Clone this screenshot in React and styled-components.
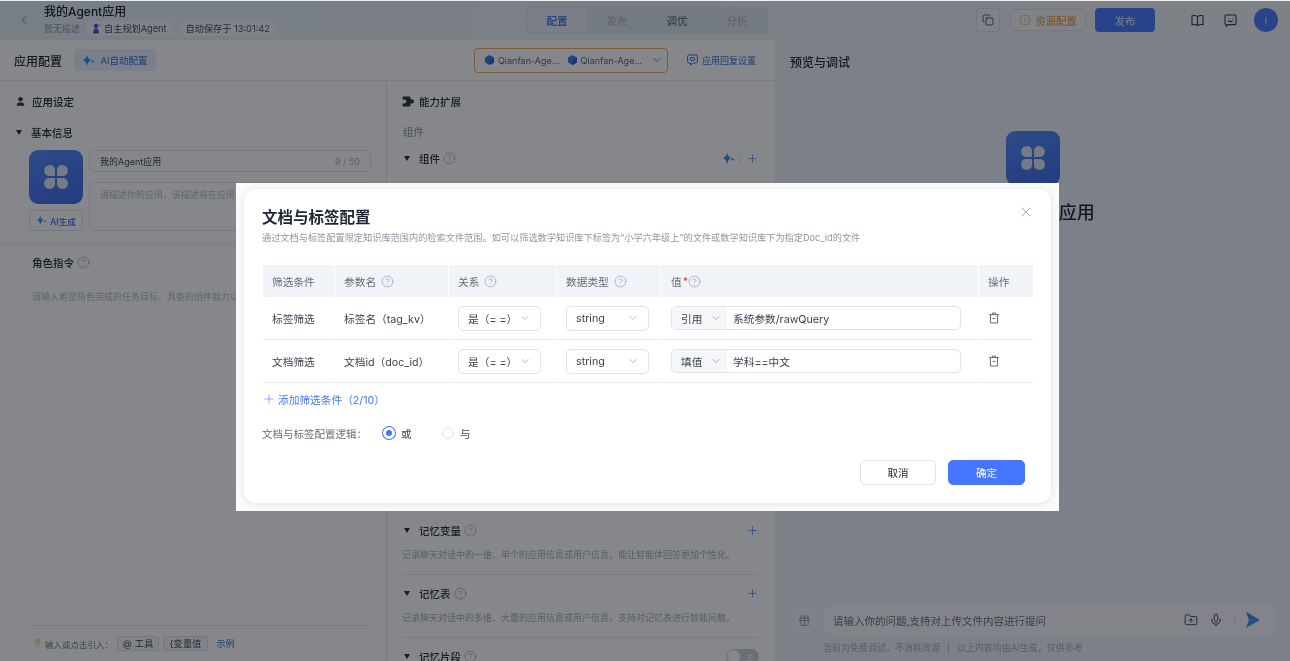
import React from 'react';
import styled, { createGlobalStyle } from 'styled-components';
import {
  ChevronLeft, ChevronDown, Plus, X, CircleHelp, Copy, CircleAlert,
  User, Mic, FolderUp, Gift, Lightbulb,
} from 'lucide-react';

const font = `Inter, "Noto Sans CJK SC", "Noto Sans", sans-serif`;

const Global = createGlobalStyle`
  html, body { margin: 0; padding: 0; height: 100%; overflow: hidden; background: #a9abad; }
  body { font-family: ${font}; color: #1f2733; }
  * { box-sizing: border-box; }
`;

const Sparkle = ({ size = 13 }) => (
  <svg width={size} height={size} viewBox="0 0 14 14" fill="#2f8fe8">
    <path d="M5.5 0.5 C6 3.8 7.2 5.6 10 6.5 C7.2 7.4 6 9.8 5.5 13.5 C5 9.8 3.8 7.4 1 6.5 C3.8 5.6 5 3.8 5.5 0.5Z" />
    <path d="M11.5 6 C11.7 7.2 12.2 7.7 13.5 8 C12.2 8.3 11.7 8.9 11.5 10 C11.3 8.9 10.8 8.3 9.5 8 C10.8 7.7 11.3 7.2 11.5 6Z" />
  </svg>
);

const Clover = ({ size = 28 }) => (
  <svg width={size} height={size} viewBox="0 0 28 28" fill="#dfe6ee">
    <path d="M13 13 H6.5 A5.5 5.5 0 1 1 13 6.5 Z" />
    <path d="M15 13 H21.5 A5.5 5.5 0 1 0 15 6.5 Z" />
    <path d="M13 15 H6.5 A5.5 5.5 0 1 0 13 21.5 Z" />
    <path d="M15 15 H21.5 A5.5 5.5 0 1 1 15 21.5 Z" />
  </svg>
);

const Cube = () => (
  <svg width="9" height="10" viewBox="0 0 10 11">
    <path d="M5 0 L10 2.8 V8.2 L5 11 L0 8.2 V2.8Z" fill="#2f7ff0" />
    <path d="M5 5 L10 2.8 V8.2 L5 11Z" fill="#1f5fd0" />
  </svg>
);

const AgentBadge = () => (
  <svg width="9" height="11" viewBox="0 0 9 11">
    <circle cx="4" cy="3" r="2.2" fill="#2c55d8" />
    <path d="M1 10.5 C1 7 2.4 5.6 4 5.6 C5.6 5.6 7 7 7 10.5Z" fill="#2c55d8" />
    <path d="M6.6 1 L8.6 2.2 L7.2 3.4Z" fill="#e8892b" />
  </svg>
);

const Trash = () => (
  <svg width="12" height="12" viewBox="0 0 12 12" fill="none" stroke="#555b66" strokeWidth="0.9">
    <path d="M1.2 2.6 H10.8" />
    <path d="M4.4 2.6 V1 H7.6 V2.6" />
    <path d="M2.4 2.6 V11 H9.6 V2.6" />
    <path d="M4.6 6.4 H7.4" />
  </svg>
);

const BookIcon = () => (
  <svg width="13" height="13" viewBox="0 0 13 13" fill="none" stroke="#33383f" strokeWidth="1.1">
    <path d="M6.5 2.6 C5.4 1.6 3 1.4 1 1.7 V10.6 C3 10.3 5.4 10.5 6.5 11.6 C7.6 10.5 10 10.3 12 10.6 V1.7 C10 1.4 7.6 1.6 6.5 2.6Z" />
    <path d="M6.5 2.6 V11.6" />
  </svg>
);

const FaceIcon = () => (
  <svg width="13" height="13" viewBox="0 0 13 13" fill="none" stroke="#33383f" strokeWidth="1.1">
    <path d="M2 1 H11 A1 1 0 0 1 12 2 V9.6 A1 1 0 0 1 11 10.6 H4.4 L2.4 12.2 V10.6 H2 A1 1 0 0 1 1 9.6 V2 A1 1 0 0 1 2 1Z" />
    <path d="M4.2 6.6 C5.2 8 7.8 8 8.8 6.6" />
    <path d="M4.4 4 V4.6 M8.6 4 V4.6" />
  </svg>
);

const ReplyIcon = () => (
  <svg width="11" height="12" viewBox="0 0 11 12" fill="none" stroke="#2c6be0" strokeWidth="1">
    <path d="M2 1 H9 A1.4 1.4 0 0 1 10.4 2.4 V7.6 A1.4 1.4 0 0 1 9 9 H6 L3.6 11 V9 H2 A1.4 1.4 0 0 1 0.6 7.6 V2.4 A1.4 1.4 0 0 1 2 1Z" />
    <rect x="3.4" y="3.6" width="4.2" height="2.8" rx="0.6" />
  </svg>
);

const PuzzleIcon = () => (
  <svg width="12" height="11" viewBox="0 0 12 11" fill="#2a2f38">
    <path d="M0.5 1.5 A1 1 0 0 1 1.5 0.5 H7.5 A1 1 0 0 1 8.5 1.5 V3.2 H9.8 A2.2 2.2 0 0 1 9.8 7.6 H8.5 V9.5 A1 1 0 0 1 7.5 10.5 H1.5 A1 1 0 0 1 0.5 9.5 V7.4 H2.4 A1.9 1.9 0 0 0 2.4 3.6 H0.5Z" />
  </svg>
);

const SendIcon = () => (
  <svg width="14" height="16" viewBox="0 0 14 16">
    <defs>
      <linearGradient id="sendFill" x1="0" y1="0" x2="0" y2="1">
        <stop offset="0" stopColor="#3a6ff0" />
        <stop offset="1" stopColor="#33b0d8" />
      </linearGradient>
    </defs>
    <path d="M0 0 L14 8 L0 16 L3 8Z" fill="url(#sendFill)" />
  </svg>
);

const Page = styled.div`
  position: relative;
  width: 1290px;
  height: 661px;
  overflow: hidden;
  filter: blur(0.35px);
`;

const Shell = styled.div`
  height: 661px;
  background: #fff;
  display: flex;
  flex-direction: column;
`;

const Overlay = styled.div`
  position: absolute;
  inset: 1px 0 0 0;
  background: rgba(11, 15, 23, 0.5);
`;

const TopBar = styled.header`
  height: 40px;
  flex: none;
  display: grid;
  grid-template-columns: 526px 242px 1fr;
  align-items: center;
  background: linear-gradient(90deg, #e3edf5, #eef1f5 60%, #f1f2f4);
`;

const BackArea = styled.div`
  display: flex;
  align-items: center;
  padding-left: 17px;
  gap: 13px;
  color: #4a5260;
`;

const TitleBlock = styled.div`
  display: flex;
  flex-direction: column;
  gap: 2px;
`;

const AppTitle = styled.div`
  font-size: 12px;
  line-height: 15px;
  font-weight: 500;
  color: #151a22;
`;

const MetaRow = styled.div`
  display: flex;
  align-items: center;
  font-size: 9px;
  line-height: 15px;
  color: #8b929d;
`;

const MetaTag = styled.span`
  display: inline-flex;
  align-items: center;
  gap: 3px;
  height: 15px;
  padding: 0 6px;
  margin-left: ${(p) => p.$gap}px;
  font-size: 9.2px;
  color: #444b57;
  background: #f2f5f8;
  border-radius: 3px;
`;

const Tabs = styled.nav`
  height: 28px;
  padding: 2px 0 2px 1px;
  display: grid;
  grid-template-columns: 60px 60px 60px 60px;
  background: #dbe4ec;
  border-radius: 5px;
`;

const Tab = styled.div`
  display: flex;
  align-items: center;
  justify-content: center;
  font-size: 10.5px;
  font-weight: 500;
  border-radius: 5px;
  color: ${(p) => (p.$active ? '#2c62e8' : p.$muted ? '#b0b7c1' : '#6a7280')};
  background: ${(p) => (p.$active ? '#e9eff6' : 'transparent')};
`;

const TopActions = styled.div`
  display: flex;
  align-items: center;
  padding-left: 208px;
`;

const SquareBtn = styled.div`
  width: 24px;
  height: 24px;
  display: flex;
  align-items: center;
  justify-content: center;
  border: 1px solid #dcdfe4;
  border-radius: 4px;
  background: #f4f5f7;
`;

const WarnBtn = styled.div`
  width: 76px;
  height: 22px;
  margin-left: 10px;
  display: flex;
  align-items: center;
  justify-content: center;
  gap: 4px;
  font-size: 10.3px;
  color: #e8892b;
  border: 1px solid #dcdfe4;
  border-radius: 4px;
  background: #f6f6f6;
`;

const PublishBtn = styled.div`
  width: 60px;
  height: 24px;
  margin-left: 9px;
  display: flex;
  align-items: center;
  justify-content: center;
  font-size: 10.5px;
  color: #e6ecfa;
  border-radius: 4px;
  background: #4676ff;
`;

const IconSlot = styled.div`
  display: flex;
  margin-left: ${(p) => p.$gap}px;
`;

const Avatar = styled.div`
  width: 24px;
  height: 24px;
  margin-left: 17px;
  display: flex;
  align-items: center;
  justify-content: center;
  border-radius: 50%;
  font-size: 9px;
  color: #e6ecfa;
  background: #4676ff;
`;

const Body = styled.div`
  flex: 1;
  min-height: 0;
  display: grid;
  grid-template-columns: 775px 1fr;
`;

const ConfigPane = styled.section`
  display: flex;
  flex-direction: column;
  min-height: 0;
  overflow: hidden;
  background: #fff;
`;

const ConfigBar = styled.div`
  height: 41px;
  flex: none;
  display: flex;
  align-items: center;
  padding: 0 19px 0 14px;
  border-bottom: 1px solid #e7e9ed;
`;

const BarTitle = styled.h2`
  margin: 0;
  font-size: 12px;
  font-weight: 500;
  color: #1a2029;
`;

const AutoBtn = styled.div`
  width: 82px;
  height: 22px;
  margin-left: 12px;
  display: flex;
  align-items: center;
  justify-content: center;
  gap: 5px;
  font-size: 9.5px;
  color: #2c6be0;
  border-radius: 3px;
  background: #e8f1fb;
`;

const ModelPicker = styled.div`
  width: 194px;
  height: 25px;
  margin-left: auto;
  display: flex;
  align-items: center;
  padding: 0 4px 0 10px;
  gap: 8px;
  font-size: 9px;
  color: #5a6270;
  white-space: nowrap;
  border: 1px solid #f0a85a;
  border-radius: 4px;
`;

const ModelItem = styled.span`
  display: inline-flex;
  align-items: center;
  gap: 4px;
`;

const PickerArrow = styled(ChevronDown).attrs({ size: 12, strokeWidth: 1.4 })`
  color: #2a2f38;
  flex: none;
  margin-left: auto;
`;

const ReplyLink = styled.div`
  margin-left: 19px;
  display: flex;
  align-items: center;
  gap: 4px;
  font-size: 9px;
  color: #2c6be0;
`;

const Columns = styled.div`
  flex: 1;
  min-height: 0;
  display: grid;
  grid-template-columns: 387px 1fr;
`;

const Column = styled.div`
  display: flex;
  flex-direction: column;
  min-height: 0;
  overflow: hidden;
  border-right: ${(p) => (p.$ruled ? '1px solid #e7e9ed' : 'none')};
`;

const SectionHead = styled.div`
  display: flex;
  align-items: center;
  gap: 6px;
  height: 16px;
  margin: 12px 0 0 ${(p) => p.$left}px;
  font-size: 10.5px;
  font-weight: 500;
  color: #1d232c;
`;

const Caret = styled.span`
  width: 0;
  height: 0;
  flex: none;
  margin-right: 3px;
  border-left: 3.5px solid transparent;
  border-right: 3.5px solid transparent;
  border-top: 5px solid #232933;
`;

const GroupHead = styled.div`
  display: flex;
  align-items: center;
  gap: 6px;
  height: 16px;
  margin-top: ${(p) => p.$top}px;
  padding-left: ${(p) => p.$left}px;
  padding-right: ${(p) => p.$right || 0}px;
  font-size: 10.5px;
  font-weight: 500;
  color: #232933;
`;

const Help = styled(CircleHelp).attrs({ size: 13, strokeWidth: 1 })`
  color: #7f8794;
  margin-left: -3px;
  flex: none;
`;

const BasicInfo = styled.div`
  display: grid;
  grid-template-columns: 54px 282px;
  column-gap: 6px;
  margin: 10px 0 0 29px;
  padding-bottom: 12px;
`;

const IconColumn = styled.div`
  display: flex;
  flex-direction: column;
  gap: 6px;
`;

const AppIcon = styled.div`
  width: ${(p) => p.$size}px;
  height: ${(p) => p.$size}px;
  display: flex;
  align-items: center;
  justify-content: center;
  border-radius: 9px;
  background: linear-gradient(160deg, #4d88f5, #3c66ea);
`;

const GenBtn = styled.div`
  width: 54px;
  height: 21px;
  display: flex;
  align-items: center;
  justify-content: center;
  gap: 3px;
  font-size: 8.5px;
  font-weight: 500;
  color: #2c6be0;
  border: 1px solid #dfe2e6;
  border-radius: 4px;
`;

const FieldColumn = styled.div`
  display: flex;
  flex-direction: column;
  gap: 10px;
`;

const NameField = styled.div`
  height: 22px;
  display: flex;
  align-items: center;
  justify-content: space-between;
  padding: 0 10px;
  font-size: 9px;
  color: #3a414d;
  border: 1px solid #e2e4e8;
  border-radius: 4px;
`;

const Counter = styled.span`
  color: #a4abb5;
`;

const DescField = styled.div`
  height: 49px;
  padding: 5px 10px;
  font-size: 9px;
  line-height: 14px;
  color: #b4b9c1;
  border: 1px solid #e2e4e8;
  border-radius: 4px;
  white-space: nowrap;
  overflow: hidden;
`;

const Divider = styled.div`
  height: 1px;
  flex: none;
  background: #e7e9ed;
`;

const PromptHint = styled.div`
  margin: 20px 0 0 32px;
  font-size: 9px;
  line-height: 14px;
  color: #b4b9c1;
  white-space: nowrap;
`;

const RefRow = styled.div`
  margin: auto 16px 0 32px;
  border-top: 1px solid #e7e9ed;
  height: 36px;
  display: flex;
  align-items: center;
  gap: 4px;
  font-size: 8.5px;
  color: #6a717d;
`;

const Bulb = styled(Lightbulb).attrs({ size: 11, strokeWidth: 1.1 })`
  color: #e8c877;
  fill: #f6e2ad;
  margin-right: -2px;
  flex: none;
`;

const RefChip = styled.span`
  height: 15px;
  padding: 0 5px;
  display: inline-flex;
  align-items: center;
  font-size: 9px;
  letter-spacing: 0.3px;
  color: #3a414d;
  border: 1px solid #dcdfe4;
  border-radius: 2px;
  background: #f4f5f7;
`;

const RefLink = styled.span`
  margin-left: 5px;
  font-size: 9px;
  color: #2c6be0;
`;

const FeatureHead = styled.div`
  margin: 13px 0 0 15px;
  display: flex;
  align-items: center;
  gap: 5px;
  height: 16px;
  font-size: 10.5px;
  font-weight: 500;
  color: #1d232c;
`;

const SubLabel = styled.div`
  margin: 16px 0 0 16px;
  font-size: 10.5px;
  line-height: 16px;
  color: #8b929d;
`;

const HeadTools = styled.span`
  margin-left: auto;
  display: inline-flex;
  align-items: center;
  gap: 5px;
  color: #2c6be0;
`;

const ToolRule = styled.i`
  width: 1px;
  height: 10px;
  background: #dcdfe4;
`;

const Spacer = styled.div`
  height: ${(p) => p.$h}px;
  flex: none;
`;

const FeatureDesc = styled.div`
  margin: 10px 16px 0 15px;
  padding-bottom: 12px;
  font-size: 9px;
  line-height: 14px;
  color: #a4abb5;
  border-bottom: 1px solid #e7e9ed;
  white-space: nowrap;
`;

const Toggle = styled.span`
  margin-left: auto;
  width: 33px;
  height: 15px;
  padding: 1px 6px 1px 1px;
  border-radius: 8px;
  background: #c9ced6;
  display: flex;
  justify-content: space-between;
  align-items: center;
  font-size: 7px;
  font-weight: 400;
  color: #fff;
`;

const Knob = styled.i`
  width: 13px;
  height: 13px;
  border-radius: 50%;
  background: #fff;
`;

const PreviewPane = styled.section`
  display: flex;
  flex-direction: column;
  background: #edf1f9;
`;

const PreviewTitle = styled.h2`
  margin: 15px 0 0 15px;
  font-size: 12px;
  line-height: 16px;
  font-weight: 500;
  color: #1a2029;
`;

const Hero = styled.div`
  margin-top: 60px;
  padding-left: 1px;
  display: flex;
  flex-direction: column;
  align-items: center;
  gap: 17px;
`;

const HeroTitle = styled.div`
  font-size: 18px;
  line-height: 22px;
  font-weight: 500;
  color: #1a2029;
`;

const ChatDock = styled.div`
  margin-top: auto;
  padding: 0 13px 7px 16px;
`;

const ChatRow = styled.div`
  display: flex;
  align-items: center;
  gap: 8px;
`;

const GiftBtn = styled.div`
  width: 26px;
  height: 26px;
  flex: none;
  display: flex;
  align-items: center;
  justify-content: center;
  border-radius: 50%;
  color: #59606b;
  background: #f3f5f9;
`;

const ChatInput = styled.div`
  flex: 1;
  height: 30px;
  display: flex;
  align-items: center;
  padding: 0 17px 0 8px;
  font-size: 10.5px;
  color: #656c78;
  border-radius: 8px;
  background: #f8f9fb;
`;

const ChatTools = styled.span`
  margin-left: auto;
  display: inline-flex;
  align-items: center;
  gap: 11px;
  color: #2a2f38;
`;

const ChatNote = styled.div`
  margin: 7px 0 0 32px;
  font-size: 9px;
  line-height: 12px;
  color: #a4abb5;
  display: flex;
  gap: 7px;
`;

const ModalFrame = styled.div`
  position: absolute;
  left: 236px;
  top: 183px;
  width: 823px;
  height: 328px;
  padding: 6px 8px 8px;
  background: #fcfcfc;
`;

const Modal = styled.div`
  position: relative;
  height: 100%;
  padding: 20px 18px 0;
  display: flex;
  flex-direction: column;
  background: #fff;
  border-radius: 12px;
  box-shadow: 0 1px 8px rgba(30, 40, 60, 0.13);
`;

const CloseBtn = styled(X).attrs({ size: 16, strokeWidth: 1 })`
  position: absolute;
  top: 15px;
  right: 17px;
  color: #7a818c;
`;

const ModalTitle = styled.h3`
  margin: 0;
  font-size: 15.5px;
  line-height: 18px;
  font-weight: 600;
  color: #1f2733;
`;

const ModalDesc = styled.p`
  margin: 4px 0 0;
  font-size: 9.2px;
  line-height: 14px;
  color: #8f96a1;
  white-space: nowrap;
`;

const Table = styled.div`
  margin: 20px 0 0 1px;
  display: grid;
  grid-template-columns: 71px 113px 107px 103px 317px 54px;
  column-gap: 1px;
  font-size: 10.7px;
`;

const HeadCell = styled.div`
  height: 32px;
  display: flex;
  align-items: center;
  padding-left: 9px;
  gap: 8px;
  color: #666d79;
  background: #f0f4f9;
`;

const ValueHead = styled(HeadCell)`
  padding-left: 10px;
  gap: 1px;
  ${Help} { margin-left: -1px; }
`;

const Cell = styled.div`
  height: 43px;
  display: flex;
  align-items: center;
  padding-left: 9px;
  color: #3b424e;
  border-bottom: 1px solid #e8eaee;
`;

const SelectBox = styled.div`
  width: 83px;
  height: 25px;
  display: flex;
  align-items: center;
  justify-content: space-between;
  padding: 0 9px;
  color: #3b424e;
  border: 1px solid #e0e3e8;
  border-radius: 5px;
`;

const ValueGroup = styled.div`
  width: 290px;
  height: 24px;
  margin-left: 1px;
  display: flex;
  overflow: hidden;
  border: 1px solid #e0e3e8;
  border-radius: 5px;
`;

const ValuePrefix = styled.div`
  width: 55px;
  flex: none;
  display: flex;
  align-items: center;
  gap: 8px;
  padding-left: 9px;
  color: #3b424e;
  background: #f4f6f9;
`;

const ValueText = styled.div`
  display: flex;
  align-items: center;
  padding-left: 6px;
  color: #3b424e;
`;

const Required = styled.span`
  color: #f04545;
  font-size: 10px;
  font-weight: 600;
`;

const AddRow = styled.div`
  margin-top: 8px;
  height: 16px;
  display: flex;
  align-items: center;
  gap: 2px;
  font-size: 10.7px;
  color: #4676ff;
`;

const LogicRow = styled.div`
  margin-top: 18px;
  height: 16px;
  display: flex;
  align-items: center;
  font-size: 10.5px;
  color: #666d79;
`;

const RadioOption = styled.span`
  display: inline-flex;
  align-items: center;
  gap: 6px;
  width: 59px;
  margin-left: ${(p) => p.$gap || 0}px;
  color: #3b424e;
`;

const Radio = styled.i`
  width: 12px;
  height: 12px;
  border-radius: 50%;
  background: #fff;
  border: ${(p) => (p.$on ? '3px solid #fff' : '1px solid #dfe2e6')};
  box-shadow: ${(p) => (p.$on ? '0 0 0 1px #4676ff' : 'none')};
  &::after {
    content: '';
    display: ${(p) => (p.$on ? 'block' : 'none')};
    width: 6px;
    height: 6px;
    border-radius: 50%;
    background: #4676ff;
  }
`;

const Footer = styled.div`
  margin-top: 19px;
  padding-right: 8px;
  display: flex;
  justify-content: flex-end;
  gap: 12px;
`;

const Button = styled.div`
  width: ${(p) => (p.$primary ? 77 : 76)}px;
  height: 25px;
  display: flex;
  align-items: center;
  justify-content: center;
  font-size: 10.5px;
  border-radius: 5px;
  color: ${(p) => (p.$primary ? '#fff' : '#1f2733')};
  background: ${(p) => (p.$primary ? '#4676ff' : '#fff')};
  border: 1px solid ${(p) => (p.$primary ? '#4676ff' : '#dfe2e6')};
`;

const Chevron = styled(ChevronDown).attrs({ size: 12, strokeWidth: 1 })`
  color: #6a717d;
  flex: none;
`;

const rows = [
  { kind: '标签筛选', name: '标签名（tag_kv）', mode: '引用', value: '系统参数/rawQuery' },
  { kind: '文档筛选', name: '文档id（doc_id）', mode: '填值', value: '学科==中文' },
];

function FilterTable() {
  return (
    <Table>
      <HeadCell>筛选条件</HeadCell>
      <HeadCell>参数名 <Help /></HeadCell>
      <HeadCell>关系 <Help /></HeadCell>
      <HeadCell>数据类型 <Help /></HeadCell>
      <ValueHead>值<Required>*</Required><Help /></ValueHead>
      <HeadCell>操作</HeadCell>
      {rows.map((r) => (
        <React.Fragment key={r.kind}>
          <Cell>{r.kind}</Cell>
          <Cell>{r.name}</Cell>
          <Cell><SelectBox>是（= =）<Chevron /></SelectBox></Cell>
          <Cell><SelectBox>string<Chevron /></SelectBox></Cell>
          <Cell>
            <ValueGroup>
              <ValuePrefix>{r.mode}<Chevron /></ValuePrefix>
              <ValueText>{r.value}</ValueText>
            </ValueGroup>
          </Cell>
          <Cell><Trash /></Cell>
        </React.Fragment>
      ))}
    </Table>
  );
}

export default function App() {
  return (
    <Page>
      <Global />
      <Shell>
        <TopBar>
          <BackArea>
            <ChevronLeft size={14} strokeWidth={1.2} />
            <TitleBlock>
              <AppTitle>我的Agent应用</AppTitle>
              <MetaRow>
                暂无描述
                <MetaTag $gap={6}><AgentBadge />自主规划Agent</MetaTag>
                <MetaTag $gap={7}>自动保存于 13:01:42</MetaTag>
              </MetaRow>
            </TitleBlock>
          </BackArea>
          <Tabs>
            <Tab $active>配置</Tab>
            <Tab $muted>发布</Tab>
            <Tab>调优</Tab>
            <Tab $muted>分析</Tab>
          </Tabs>
          <TopActions>
            <SquareBtn><Copy size={12} strokeWidth={1.7} color="#33383f" /></SquareBtn>
            <WarnBtn><CircleAlert size={12} strokeWidth={1.1} />资源配置</WarnBtn>
            <PublishBtn>发布</PublishBtn>
            <IconSlot $gap={36}><BookIcon /></IconSlot>
            <IconSlot $gap={20}><FaceIcon /></IconSlot>
            <Avatar>I</Avatar>
          </TopActions>
        </TopBar>
        <Body>
          <ConfigPane>
            <ConfigBar>
              <BarTitle>应用配置</BarTitle>
              <AutoBtn><Sparkle />AI自动配置</AutoBtn>
              <ModelPicker>
                <ModelItem><Cube />Qianfan-Age...</ModelItem>
                <ModelItem><Cube />Qianfan-Age...</ModelItem>
                <PickerArrow />
              </ModelPicker>
              <ReplyLink><ReplyIcon />应用回复设置</ReplyLink>
            </ConfigBar>
            <Columns>
              <Column $ruled>
                <SectionHead $left={15}><User size={11} fill="#2a2f38" color="#2a2f38" />应用设定</SectionHead>
                <GroupHead $top={15} $left={16}><Caret />基本信息</GroupHead>
                <BasicInfo>
                  <IconColumn>
                    <AppIcon $size={54}><Clover /></AppIcon>
                    <GenBtn><Sparkle size={11} />AI生成</GenBtn>
                  </IconColumn>
                  <FieldColumn>
                    <NameField>我的Agent应用<Counter>9 / 50</Counter></NameField>
                    <DescField>请描述你的应用，该描述将在应用发布后展示</DescField>
                  </FieldColumn>
                </BasicInfo>
                <Divider />
                <GroupHead $top={10} $left={32}>角色指令 <Help /></GroupHead>
                <PromptHint>请输入希望角色完成的任务目标、具备的组件能力以及回复的要求与限制等</PromptHint>
                <RefRow>
                  <Bulb />
                  输入或点击引入：
                  <RefChip>@ 工具</RefChip>
                  <RefChip>{'{'}变量值</RefChip>
                  <RefLink>示例</RefLink>
                </RefRow>
              </Column>
              <Column>
                <FeatureHead><PuzzleIcon />能力扩展</FeatureHead>
                <SubLabel>组件</SubLabel>
                <GroupHead $top={10} $left={17} $right={16}>
                  <Caret />组件 <Help />
                  <HeadTools><Sparkle /><ToolRule /><Plus size={13} strokeWidth={1.2} /></HeadTools>
                </GroupHead>
                <Spacer $h={349} />
                <GroupHead $top={8} $left={17} $right={16}>
                  <Caret />记忆变量 <Help />
                  <HeadTools><Plus size={13} strokeWidth={1.2} /></HeadTools>
                </GroupHead>
                <FeatureDesc>记录聊天对话中的一维、单个的应用信息或用户信息，能让智能体回答更加个性化。</FeatureDesc>
                <GroupHead $top={11} $left={17} $right={16}>
                  <Caret />记忆表 <Help />
                  <HeadTools><Plus size={13} strokeWidth={1.2} /></HeadTools>
                </GroupHead>
                <FeatureDesc>记录聊天对话中的多维、大量的应用信息或用户信息，支持对记忆表进行智能问数。</FeatureDesc>
                <GroupHead $top={11} $left={17} $right={16}>
                  <Caret />记忆片段 <Help />
                  <Toggle><Knob />关</Toggle>
                </GroupHead>
              </Column>
            </Columns>
          </ConfigPane>
          <PreviewPane>
            <PreviewTitle>预览与调试</PreviewTitle>
            <Hero>
              <AppIcon $size={54}><Clover /></AppIcon>
              <HeroTitle>我的Agent应用</HeroTitle>
            </Hero>
            <ChatDock>
              <ChatRow>
                <GiftBtn><Gift size={13} strokeWidth={1} /></GiftBtn>
                <ChatInput>
                  请输入你的问题,支持对上传文件内容进行提问
                  <ChatTools>
                    <FolderUp size={14} strokeWidth={1.5} />
                    <Mic size={14} strokeWidth={1.5} />
                    <ToolRule />
                    <SendIcon />
                  </ChatTools>
                </ChatInput>
              </ChatRow>
              <ChatNote><span>当前为免费调试，不消耗资源</span><span>|</span><span>以上内容均由AI生成，仅供参考</span></ChatNote>
            </ChatDock>
          </PreviewPane>
        </Body>
      </Shell>
      <Overlay />
      <ModalFrame>
        <Modal>
          <CloseBtn />
          <ModalTitle>文档与标签配置</ModalTitle>
          <ModalDesc>通过文档与标签配置限定知识库范围内的检索文件范围。如可以筛选数学知识库下标签为“小学六年级上”的文件或数学知识库下为指定Doc_id的文件</ModalDesc>
          <FilterTable />
          <AddRow><Plus size={14} strokeWidth={1} />添加筛选条件（2/10）</AddRow>
          <LogicRow>
            文档与标签配置逻辑：
            <RadioOption $gap={16}><Radio $on />或</RadioOption>
            <RadioOption><Radio />与</RadioOption>
          </LogicRow>
          <Footer>
            <Button>取消</Button>
            <Button $primary>确定</Button>
          </Footer>
        </Modal>
      </ModalFrame>
    </Page>
  );
}
